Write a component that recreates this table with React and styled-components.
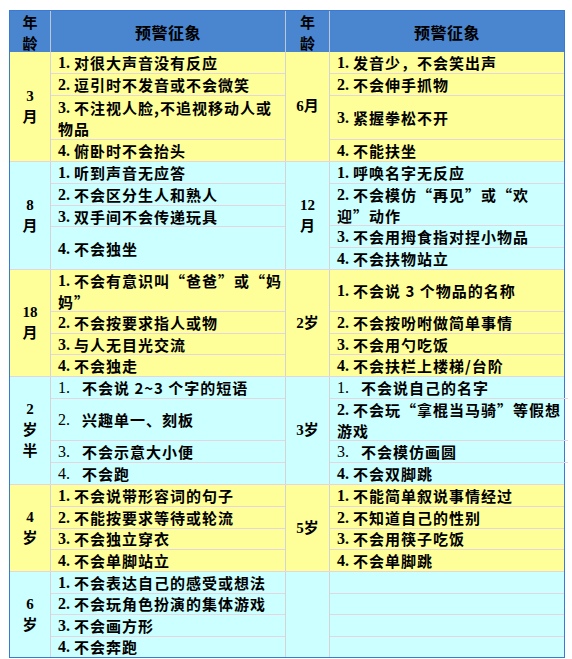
import React from "react";
import styled, { createGlobalStyle } from "styled-components";

const GlobalStyle = createGlobalStyle`
  html, body { margin: 0; padding: 0; background: #ffffff; }
`;

const COLS = "41px 235px 44px 1fr";
const VLINE = "#d3d3d8";
const HLINE = "#e4d6df";
const BG = { yellow: "#ffff99", cyan: "#ccffff" };

const Table = styled.div`
  margin: 10px 0 0 9px;
  width: 556px;
  box-sizing: border-box;
  border: 1px solid #3a7ad6;
  font-family: "Noto Sans CJK SC", "Noto Sans", sans-serif;
  font-weight: 700;
  font-size: 15px;
  letter-spacing: 1px;
  color: #000;
`;

const HeaderRow = styled.div`
  display: grid;
  grid-template-columns: ${COLS};
  height: 41px;
  background: #4a86d0;
`;

const HeaderCell = styled.div`
  display: flex;
  align-items: center;
  justify-content: center;
  text-align: center;
  line-height: 21px;
  font-size: ${(p) => (p.$stack ? "15px" : "16px")};
  letter-spacing: ${(p) => (p.$stack ? "0" : "0.5px")};
  border-right: ${(p) => (p.$last ? "none" : "1px solid #b9c7dd")};
`;

const Group = styled.div`
  display: grid;
  grid-template-columns: ${COLS};
  height: ${(p) => p.$h}px;
  background: ${(p) => BG[p.$tone]};
  border-bottom: 1px solid ${HLINE};
  &:last-child {
    border-bottom: none;
  }
`;

const Age = styled.div`
  display: flex;
  align-items: center;
  justify-content: center;
  text-align: center;
  line-height: 21px;
  letter-spacing: 0;
  font-family: "Liberation Serif", "Noto Sans CJK SC", serif;
  border-right: 1px solid ${VLINE};
`;

const SignList = styled.div`
  display: flex;
  flex-direction: column;
  min-height: 0;
  border-right: ${(p) => (p.$divider ? `1px solid ${VLINE}` : "none")};
`;

const Item = styled.div`
  flex: ${(p) => p.$span} 1 0;
  min-height: 0;
  display: flex;
  flex-direction: column;
  justify-content: center;
  padding: 0 7px;
  border-bottom: 1px solid ${HLINE};
  &:last-child {
    border-bottom: none;
  }
`;

const Line = styled.div`
  height: 21px;
  line-height: 21px;
  white-space: nowrap;
  display: flex;
  align-items: center;
`;

const Num = styled.span`
  display: inline-block;
  flex: none;
  width: ${(p) => (p.$light ? "24px" : "16px")};
  letter-spacing: 0;
  font-family: "Liberation Serif", serif;
  font-size: 16px;
  font-weight: ${(p) => (p.$light ? 400 : 700)};
`;

const it = (n, t, span = 1, light = false) => ({ n, t, span, light });

const groups = [
  {
    tone: "yellow",
    h: 109,
    a1: ["3", "月"],
    a2: ["6月"],
    left: [
      it("1.", "对很大声音没有反应"),
      it("2.", "逗引时不发音或不会微笑"),
      it("3.", "不注视人脸,不追视移动人或\n物品", 2),
      it("4.", "俯卧时不会抬头"),
    ],
    right: [
      it("1.", "发音少，不会笑出声"),
      it("2.", "不会伸手抓物"),
      it("3.", "紧握拳松不开", 2),
      it("4.", "不能扶坐"),
    ],
  },
  {
    tone: "cyan",
    h: 107,
    a1: ["8", "月"],
    a2: ["12", "月"],
    left: [
      it("1.", "听到声音无应答"),
      it("2.", "不会区分生人和熟人"),
      it("3.", "双手间不会传递玩具"),
      it("4.", "不会独坐", 2),
    ],
    right: [
      it("1.", "呼唤名字无反应"),
      it("2.", "不会模仿“再见”或“欢\n迎”动作", 2),
      it("3.", "不会用拇食指对捏小物品"),
      it("4.", "不会扶物站立"),
    ],
  },
  {
    tone: "yellow",
    h: 106,
    a1: ["18", "月"],
    a2: ["2岁"],
    left: [
      it("1.", "不会有意识叫“爸爸”或“妈\n妈”", 2),
      it("2.", "不会按要求指人或物"),
      it("3.", "与人无目光交流"),
      it("4.", "不会独走"),
    ],
    right: [
      it("1.", "不会说 3 个物品的名称", 2),
      it("2.", "不会按吩咐做简单事情"),
      it("3.", "不会用勺吃饭"),
      it("4.", "不会扶栏上楼梯/台阶"),
    ],
  },
  {
    tone: "cyan",
    h: 107,
    a1: ["2", "岁", "半"],
    a2: ["3岁"],
    left: [
      it("1.", "不会说 2~3 个字的短语", 1, true),
      it("2.", "兴趣单一、刻板", 2, true),
      it("3.", "不会示意大小便", 1, true),
      it("4.", "不会跑", 1, true),
    ],
    right: [
      it("1.", "不会说自己的名字", 1, true),
      it("2.", "不会玩“拿棍当马骑”等假想\n游戏", 2),
      it("3.", "不会模仿画圆", 1, true),
      it("4.", "不会双脚跳"),
    ],
  },
  {
    tone: "yellow",
    h: 86,
    a1: ["4", "岁"],
    a2: ["5岁"],
    left: [
      it("1.", "不会说带形容词的句子"),
      it("2.", "不能按要求等待或轮流"),
      it("3.", "不会独立穿衣"),
      it("4.", "不会单脚站立"),
    ],
    right: [
      it("1.", "不能简单叙说事情经过"),
      it("2.", "不知道自己的性别"),
      it("3.", "不会用筷子吃饭"),
      it("4.", "不会单脚跳"),
    ],
  },
  {
    tone: "cyan",
    h: 85,
    a1: ["6", "岁"],
    a2: [],
    left: [
      it("1.", "不会表达自己的感受或想法"),
      it("2.", "不会玩角色扮演的集体游戏"),
      it("3.", "不会画方形"),
      it("4.", "不会奔跑"),
    ],
    right: [it("", ""), it("", ""), it("", ""), it("", "")],
  },
];

const AgeText = ({ lines }) => (
  <div>
    {lines.map((l, i) => (
      <div key={i}>{l}</div>
    ))}
  </div>
);

const Signs = ({ items, divider }) => (
  <SignList $divider={divider}>
    {items.map((x, i) => (
      <Item key={i} $span={x.span}>
        {x.n
          ? x.t.split("\n").map((ln, j) => (
              <Line key={j}>
                {j === 0 ? <Num $light={x.light}>{x.n}</Num> : null}
                <span>{ln}</span>
              </Line>
            ))
          : null}
      </Item>
    ))}
  </SignList>
);

export default function App() {
  return (
    <>
      <GlobalStyle />
      <Table>
        <HeaderRow>
          <HeaderCell $stack>
            <div>
              年<br />龄
            </div>
          </HeaderCell>
          <HeaderCell>预警征象</HeaderCell>
          <HeaderCell $stack>
            <div>
              年<br />龄
            </div>
          </HeaderCell>
          <HeaderCell $last>预警征象</HeaderCell>
        </HeaderRow>
        {groups.map((g, i) => (
          <Group key={i} $h={g.h} $tone={g.tone}>
            <Age>
              <AgeText lines={g.a1} />
            </Age>
            <Signs items={g.left} divider />
            <Age>
              <AgeText lines={g.a2} />
            </Age>
            <Signs items={g.right} />
          </Group>
        ))}
      </Table>
    </>
  );
}
